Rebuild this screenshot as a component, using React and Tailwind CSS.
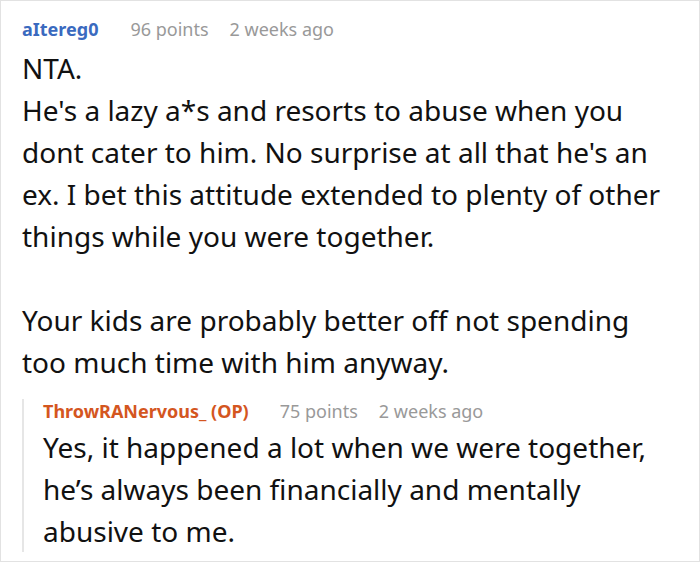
export default function App() {
  return (
    <div className="h-[562px] w-[700px] overflow-hidden border border-[#e2e2e2] bg-white pl-[21px] pr-[29px] pt-[16px] font-['Noto_Sans',sans-serif] text-[#111]">
      {/* parent comment */}
      <div className="flex items-baseline gap-[21px] text-[18px] leading-6">
        <span className="mr-[11px] font-bold text-[#3a6abf]">aItereg0</span>
        <span className="text-[#999]">96 points</span>
        <span className="text-[#999]">2 weeks ago</span>
      </div>
      <div className="mt-[6px] text-[28px] leading-[42px]">
        <p>
          NTA.
          <br />
          He's a lazy a*s and resorts to abuse when you dont cater to him. No surprise at all that he's
          an ex. I bet this attitude extended to plenty of other things while you were together.
        </p>
        <p className="mt-[42px]">
          Your kids are probably better off not spending too much time with him anyway.
        </p>
      </div>

      {/* reply */}
      <div className="mt-[27px] border-l-2 border-[#e6e6e6] pl-[19px]">
        <div className="-mt-[11px] flex items-baseline gap-[21px] text-[18px] leading-6">
          <span className="mr-[10px] font-bold text-[#d4561f]">ThrowRANervous_ (OP)</span>
          <span className="text-[#999]">75 points</span>
          <span className="text-[#999]">2 weeks ago</span>
        </div>
        <p className="-mb-[10px] mt-[3px] text-[28px] leading-[42px]">
          Yes, it happened a lot when we were together, he’s always been financially and mentally
          abusive to me.
        </p>
      </div>
    </div>
  )
}
